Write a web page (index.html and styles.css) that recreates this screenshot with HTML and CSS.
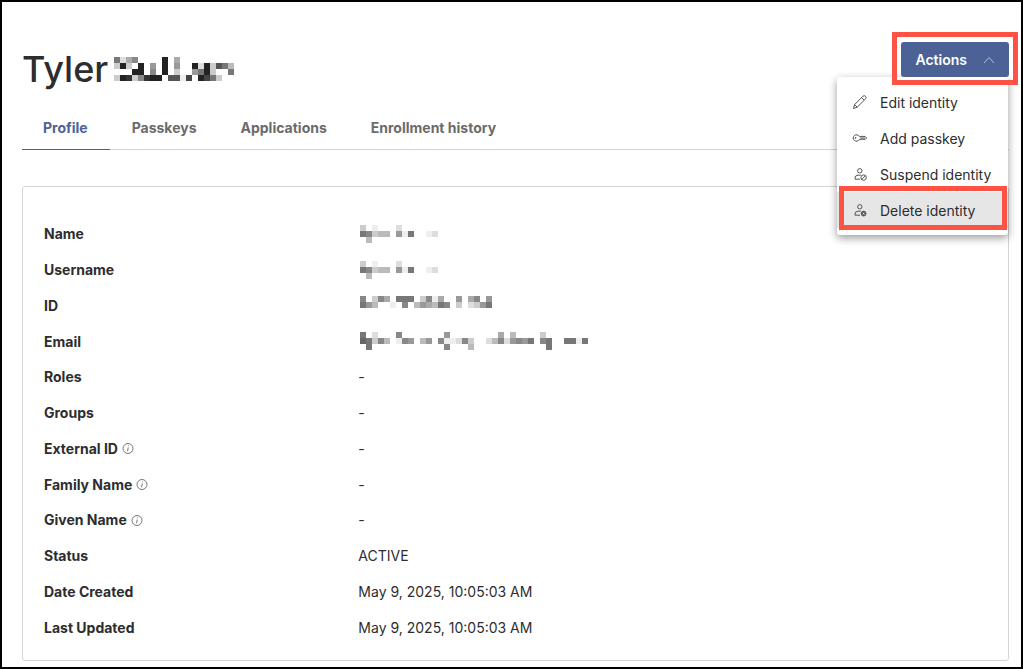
FILE: index.html
```
<!DOCTYPE html>
<html lang="en">
<head>
    <meta charset="UTF-8">
    <title>Identity Profile</title>
    <meta name="viewport" content="width=device-width, initial-scale=1.0">
    <link rel="stylesheet" href="styles.css">
</head>
<body>
    <div class="page">
        <header class="header">
            <h1>Tyler <span class="mosaic" data-cells=".ff................./7da8....2.a........./c2c.2.9.2.9..2d2c57b/..f22.8.2.c..972c..7/c23c8322.55e4.247c..7"></span></h1>

            <div class="actions">
                <button type="button" class="actions-btn" aria-expanded="true" aria-controls="actionsMenu">
                    Actions
                    <svg width="12" height="12" viewBox="0 0 12 12"><path d="M1 9 L6 3.5 L11 9"/></svg>
                </button>
                <div class="menu" id="actionsMenu">
                    <button type="button">
                        <svg width="16" height="16" viewBox="0 0 16 16"><path d="M1.5 14.5 L2.6 10.6 L11 2.2 Q12.2 1 13.5 2.3 Q14.8 3.6 13.6 4.8 L5.2 13.2 Z M2.6 10.6 L5.2 13.2 M9.6 3.6 L12.2 6.2"/></svg>
                        Edit identity
                    </button>
                    <button type="button">
                        <svg width="16" height="16" viewBox="0 0 16 16"><path d="M7.2 6.4 A3.2 3.2 0 1 0 7.2 9.6 L9 9.6 L10 8.9 L11 9.6 L12 8.9 L13 9.6 L14.6 8 L13.2 6.4 Z M8 8 H13"/><circle cx="3.6" cy="8" r="0.5"/></svg>
                        Add passkey
                    </button>
                    <button type="button">
                        <svg width="16" height="16" viewBox="0 0 16 16"><circle cx="7.8" cy="4.8" r="2.2"/><path d="M8 13.2 H3 V12 Q3.1 9.2 6 9.2 H8.8"/><circle cx="11.6" cy="11.6" r="2.7"/><path d="M9.7 13.5 L13.5 9.7"/></svg>
                        Suspend identity
                    </button>
                    <button type="button" class="selected">
                        <svg width="16" height="16" viewBox="0 0 16 16"><circle cx="7.8" cy="4.8" r="2.2"/><path d="M8 13.2 H3 V12 Q3.1 9.2 6 9.2 H8.8"/><circle class="badge" cx="11.6" cy="11.6" r="2.4"/><path class="cross" d="M10.8 10.8 L12.4 12.4 M12.4 10.8 L10.8 12.4"/></svg>
                        Delete identity
                    </button>
                </div>
            </div>
        </header>

        <nav class="tabs">
            <a href="#profile" class="active">Profile</a>
            <a href="#passkeys">Passkeys</a>
            <a href="#applications">Applications</a>
            <a href="#history">Enrollment history</a>
        </nav>

        <dl class="card" id="profile">
            <dt>Name</dt>
            <dd><span class="mosaic" data-cells="c.e...d....../78cbb.9e7..ed/.b..........."></span></dd>
            <dt>Username</dt>
            <dd><span class="mosaic" data-cells="c.e...d....../78cbb.9e7..ed/.b..........."></span></dd>
            <dt>ID</dt>
            <dd><span class="mosaic" data-cells="8.c8a.777.c8ea..9.a8.9/79b..e.8.b9ab78.c.dc97/......................"></span></dd>
            <dt>Email</dt>
            <dd><span class="mosaic" data-cells="7.d...8.......9........a.b....c......./67c8b.e89.b9.8eed8c..db8d9897.87..77e7/.7............8...b............7......"></span></dd>
            <dt>Roles</dt>
            <dd>-</dd>
            <dt>Groups</dt>
            <dd>-</dd>
            <dt>External ID <svg class="info" width="12" height="12" viewBox="0 0 12 12"><circle cx="6" cy="6.5" r="5"/><path d="M6.2 5.5 L5.6 9.3 M6.5 3.5 L6.4 4.3"/></svg></dt>
            <dd>-</dd>
            <dt>Family Name <svg class="info" width="12" height="12" viewBox="0 0 12 12"><circle cx="6" cy="6.5" r="5"/><path d="M6.2 5.5 L5.6 9.3 M6.5 3.5 L6.4 4.3"/></svg></dt>
            <dd>-</dd>
            <dt>Given Name <svg class="info" width="12" height="12" viewBox="0 0 12 12"><circle cx="6" cy="6.5" r="5"/><path d="M6.2 5.5 L5.6 9.3 M6.5 3.5 L6.4 4.3"/></svg></dt>
            <dd>-</dd>
            <dt>Status</dt>
            <dd>ACTIVE</dd>
            <dt>Date Created</dt>
            <dd>May 9, 2025, 10:05:03 AM</dd>
            <dt>Last Updated</dt>
            <dd>May 9, 2025, 10:05:03 AM</dd>
        </dl>
    </div>

    <script>
        // Each character is one 6px cell: a hex grey level, or "." for empty
        const size = 6;
        document.querySelectorAll('.mosaic').forEach(el => {
            const rows = el.dataset.cells.split('/');
            let rects = '';
            rows.forEach((row, y) => {
                [...row].forEach((c, x) => {
                    if (c !== '.') {
                        rects += `<rect x="${x * size}" y="${y * size}" width="${size}" height="${size}" fill="#${c}${c}${c}"/>`;
                    }
                });
            });
            el.innerHTML = `<svg width="${rows[0].length * size}" height="${rows.length * size}" shape-rendering="crispEdges">${rects}</svg>`;
        });
    </script>
</body>
</html>
```
FILE: styles.css
```
* { box-sizing: border-box; }
body { margin: 0; font-family: Inter, sans-serif; font-size: 14px; color: #2d2d2f; background: white; }
svg { fill: none; stroke: #555; stroke-width: 1; flex: none; }
button { font: inherit; border: none; cursor: pointer; }

.page { min-height: 100vh; display: flex; flex-direction: column; border: 2px solid black; padding: 40px 12px 6px 20px; }

.header { display: flex; justify-content: space-between; align-items: flex-start; }
h1 { display: flex; align-items: center; gap: 6px; margin: 0; font-size: 36px; font-weight: 500; line-height: 54px; }
h1 .mosaic { padding-bottom: 6px; }
.mosaic svg { display: block; stroke: none; }

.actions { position: relative; }
.actions-btn { position: relative; z-index: 2; display: flex; align-items: center; gap: 16px; height: 35px; padding: 0 14px; border-radius: 3px; background: #4c6297; color: white; font-weight: 600; }
.actions-btn::after { content: ""; position: absolute; inset: -10px -9px -8px; border: 5px solid #fd5244; }
.actions-btn svg { stroke: #b4bfd8; }

.menu { position: absolute; top: 100%; right: 1px; z-index: 1; min-width: 171px; padding: 7px 0; background: white; border-radius: 3px; box-shadow: 0 3px 8px rgba(0,0,0,0.4); }
.menu button { position: relative; display: flex; align-items: center; gap: 12px; width: 100%; height: 36px; padding: 0 14px 0 15px; background: none; color: #2d2d2f; white-space: nowrap; }
.menu button.selected { background: #e6e6e6; }
.menu button.selected::after { content: ""; position: absolute; inset: -6px 1px -2px 2px; border: 5px solid #fd5244; }
.badge { fill: #555; }
.cross { stroke: white; }

.tabs { display: flex; gap: 1px; margin-top: 10px; border-bottom: 1px solid #d4d4d4; }
.tabs a { height: 44px; margin-bottom: -1px; padding: 0 22px 0 21px; line-height: 44px; color: #6b6b6b; font-weight: 700; text-decoration: none; }
.tabs a.active { color: #4c6297; border-bottom: 1px solid #4c6297; }

.card { flex: 1; display: grid; grid-template-columns: 1fr 2fr; grid-auto-rows: 1fr; align-items: center; margin: 36px 0 0; padding: 29px 21px 15px; border: 1px solid #d4d4d4; border-radius: 3px; }
.card dt { display: flex; align-items: center; gap: 4px; font-weight: 700; }
.card dd { margin: 0; }
.card .mosaic { display: block; padding-left: 2px; }
.info { stroke: #777; }
```
